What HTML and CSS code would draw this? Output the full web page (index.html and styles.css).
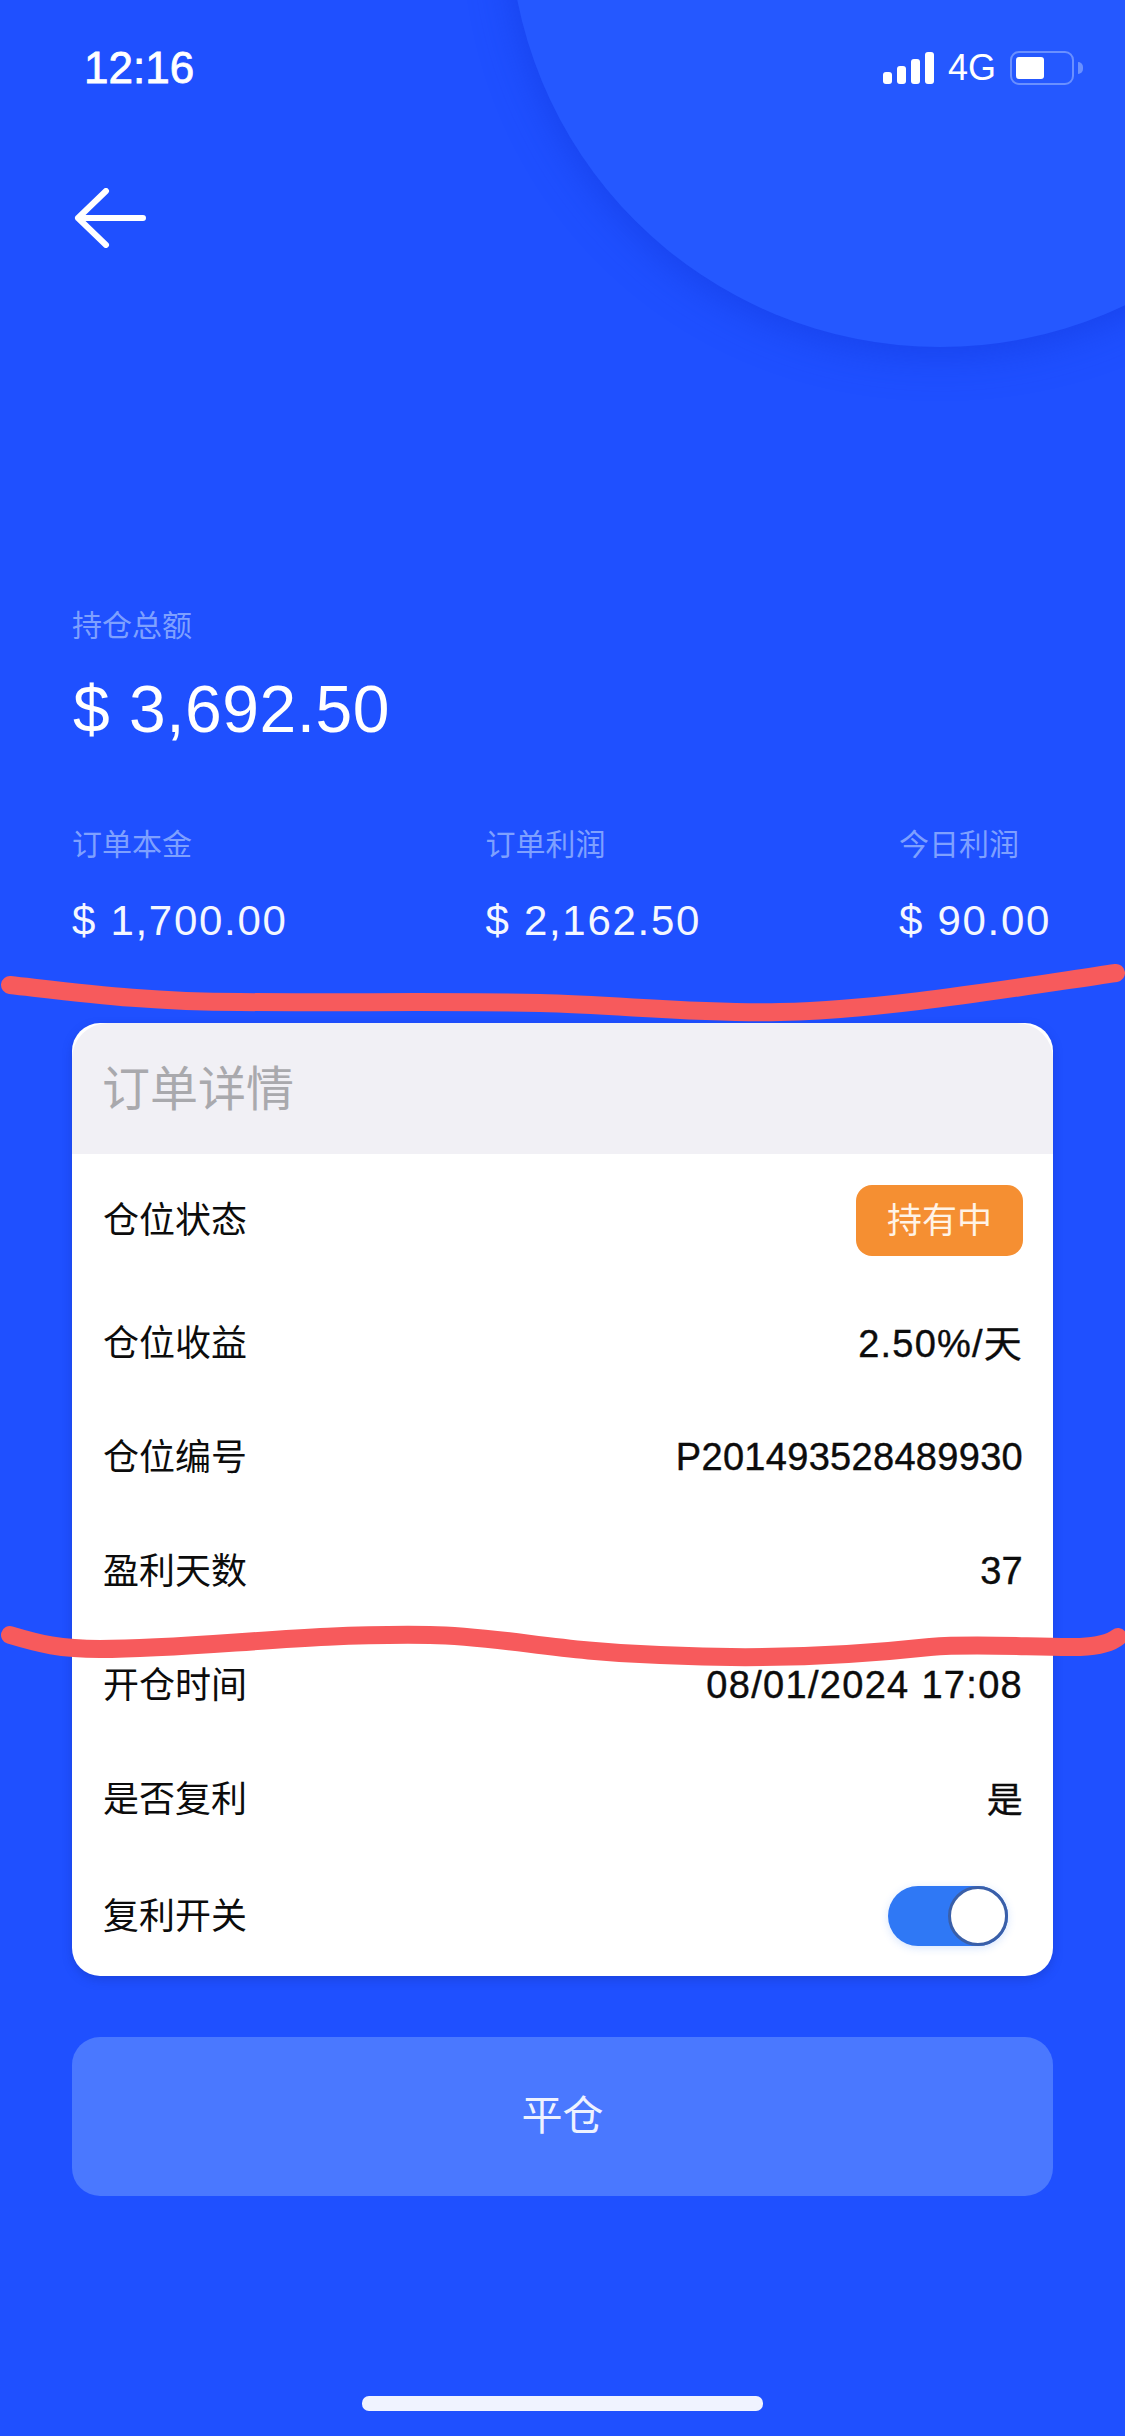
FILE: index.html
```html
<!DOCTYPE html>
<html lang="zh-CN">
<head>
    <meta charset="UTF-8">
    <meta name="viewport" content="width=device-width, initial-scale=1.0">
    <title>订单详情</title>
    <link rel="stylesheet" href="styles.css">
</head>
<body>

<div class="page">
    <div class="circle"></div>

    <div class="statusBar">
        <span class="time">12:16</span>
        <div class="statusIcons">
            <div class="signal">
                <i class="bar1"></i><i class="bar2"></i><i class="bar3"></i><i class="bar4"></i>
            </div>
            <span class="network">4G</span>
            <div class="battery"><div class="batteryFill"></div></div>
            <div class="batteryNub"></div>
        </div>
    </div>

    <div class="nav">
        <svg class="backIcon" width="72" height="60" viewBox="0 0 72 60">
            <path d="M32 3 L4 30 L32 57 M4 30 H69" fill="none" stroke="#fff" stroke-width="6" stroke-linecap="round" stroke-linejoin="round"/>
        </svg>
    </div>

    <div class="summary">
        <div class="label">持仓总额</div>
        <div class="total">$ 3,692.50</div>
        <div class="stats">
            <div class="stat">
                <div class="label">订单本金</div>
                <div class="statValue">$ 1,700.00</div>
            </div>
            <div class="stat">
                <div class="label">订单利润</div>
                <div class="statValue">$ 2,162.50</div>
            </div>
            <div class="stat">
                <div class="label">今日利润</div>
                <div class="statValue">$ 90.00</div>
            </div>
        </div>
    </div>

    <div class="card">
        <div class="cardHeader">订单详情</div>
        <div class="row rowFirst">
            <span class="rowLabel">仓位状态</span>
            <span class="badge">持有中</span>
        </div>
        <div class="row">
            <span class="rowLabel">仓位收益</span>
            <span class="value valueCn valueRate">2.50%/天</span>
        </div>
        <div class="row">
            <span class="rowLabel">仓位编号</span>
            <span class="value">P201493528489930</span>
        </div>
        <div class="row">
            <span class="rowLabel">盈利天数</span>
            <span class="value">37</span>
        </div>
        <div class="row">
            <span class="rowLabel">开仓时间</span>
            <span class="value valueDate">08/01/2024 17:08</span>
        </div>
        <div class="row">
            <span class="rowLabel">是否复利</span>
            <span class="value valueCn valueYes">是</span>
        </div>
        <div class="row rowLast">
            <span class="rowLabel">复利开关</span>
            <div class="toggle"><div class="knob"></div></div>
        </div>
    </div>

    <button class="closeBtn">平仓</button>

    <div class="homeBar"></div>

    <!-- red marker strokes drawn over the screenshot -->
    <svg class="marker" width="1125" height="2436" viewBox="0 0 1125 2436">
        <path d="M10 985 C 90 994, 150 1002, 240 1002 C 340 1003, 440 1001, 540 1003 C 620 1005, 700 1014, 780 1012 C 880 1010, 1000 990, 1116 973" />
        <path d="M10 1635 C 40 1644, 60 1649, 100 1649 C 200 1649, 300 1633, 430 1635 C 500 1636, 560 1652, 660 1655 C 740 1659, 830 1658, 930 1647 C 980 1643, 1040 1648, 1080 1647 C 1100 1646, 1112 1642, 1118 1637" />
    </svg>
</div>

</body>
</html>
```
FILE: styles.css
```css
* {
    box-sizing: border-box;
}

body {
    margin: 0;
    font-family: "Liberation Sans", "Noto Sans CJK SC", sans-serif;
}

.page {
    position: relative;
    width: 1125px;
    height: 2436px;
    overflow: hidden;
    background-color: #1f50ff;
}

.circle {
    position: absolute;
    left: 509px;
    top: -515px;
    width: 862px;
    height: 862px;
    border-radius: 50%;
    background-color: #2558ff;
    box-shadow: 0 6px 40px rgba(20, 60, 225, 0.7);
}

.statusBar {
    position: relative;
    height: 136px;
    padding: 0 42px 0 84px;
    display: flex;
    align-items: center;
    justify-content: space-between;
    color: white;
}

.time {
    font-size: 44px;
    -webkit-text-stroke: 0.8px white;
}

.statusIcons {
    display: flex;
    align-items: center;
}

.signal {
    display: flex;
    align-items: flex-end;
    gap: 5px;
    height: 32px;
}

.signal i {
    display: block;
    width: 9px;
    background-color: white;
    border-radius: 3px;
}

.bar1 { height: 12px; }
.bar2 { height: 18px; }
.bar3 { height: 25px; }
.bar4 { height: 32px; }

.network {
    margin-left: 14px;
    font-size: 36px;
    line-height: 36px;
}

.battery {
    margin-left: 14px;
    width: 64px;
    height: 34px;
    padding: 4px;
    border: 2px solid #6a90ff;
    border-radius: 9px;
}

.batteryFill {
    width: 28px;
    height: 22px;
    background-color: white;
    border-radius: 3px;
}

.batteryNub {
    margin-left: 4px;
    width: 5px;
    height: 12px;
    background-color: #6a90ff;
    border-radius: 0 6px 6px 0;
}

.nav {
    position: relative;
    height: 174px;
    padding: 52px 0 0 74px;
}

.backIcon {
    display: block;
}

.summary {
    position: relative;
    padding: 0 74px 0 72px;
    margin-top: 301px;
}

.label {
    font-size: 30px;
    line-height: 30px;
    color: #7ea0ff;
}

.total {
    margin-top: 28px;
    margin-left: 1px;
    font-size: 66px;
    line-height: 80px;
    letter-spacing: 0.5px;
    color: white;
}

.stats {
    margin-top: 81px;
    display: flex;
    justify-content: space-between;
}

.statValue {
    margin-top: 36px;
    font-size: 42px;
    line-height: 50px;
    letter-spacing: 1.7px;
    color: #f4f7ff;
}

.card {
    position: relative;
    margin: 77px 72px 0;
    background-color: white;
    border-radius: 28px;
    overflow: hidden;
    box-shadow: 0 4px 10px rgba(20, 50, 170, 0.35);
}

.cardHeader {
    height: 131px;
    padding: 0 30px 8px;
    display: flex;
    align-items: center;
    background-color: #f1f0f5;
    border-radius: 36px 36px 0 0;
    font-size: 48px;
    color: #a9a9ad;
}

.row {
    height: 114px;
    padding: 0 30px 0 31px;
    display: flex;
    align-items: center;
    justify-content: space-between;
    font-size: 36px;
    color: #0c0c0c;
}

.rowFirst {
    height: 132px;
}

.rowLast {
    height: 120px;
}

.rowLabel {
    margin-bottom: 6px;
}

.value {
    font-size: 38px;
    letter-spacing: 0.3px;
    -webkit-text-stroke: 0.4px #0c0c0c;
}

.valueCn {
    margin-bottom: 5px;
}

.valueRate {
    letter-spacing: 1.2px;
}

.valueYes {
    font-size: 36px;
}

.valueDate {
    letter-spacing: 1.3px;
}

.badge {
    width: 167px;
    height: 71px;
    padding-bottom: 5px;
    display: flex;
    align-items: center;
    justify-content: center;
    background-color: #f58f32;
    border-radius: 16px;
    font-size: 35px;
    color: #fff3e6;
}

.toggle {
    position: relative;
    width: 120px;
    height: 60px;
    margin-right: 15px;
    background-color: #2f78f5;
    border-radius: 30px;
    box-shadow: 0 2px 8px rgba(47, 120, 245, 0.2);
}

.knob {
    position: absolute;
    right: 0;
    top: 0;
    width: 60px;
    height: 60px;
    background-color: white;
    border: 3px solid #3a5fa8;
    border-radius: 50%;
}

.closeBtn {
    position: relative;
    display: block;
    width: 981px;
    height: 159px;
    margin: 61px 72px 0;
    padding-bottom: 10px;
    background-color: #4a78ff;
    border: none;
    border-radius: 28px;
    font-family: inherit;
    font-size: 41px;
    color: #eef2ff;
}

.homeBar {
    position: relative;
    width: 401px;
    height: 15px;
    margin: 200px auto 0;
    background-color: #f0f3ff;
    border-radius: 7px;
}

.marker {
    position: absolute;
    left: 0;
    top: 0;
    fill: none;
    stroke: #f75a5c;
    stroke-width: 18;
    stroke-linecap: round;
}
```
